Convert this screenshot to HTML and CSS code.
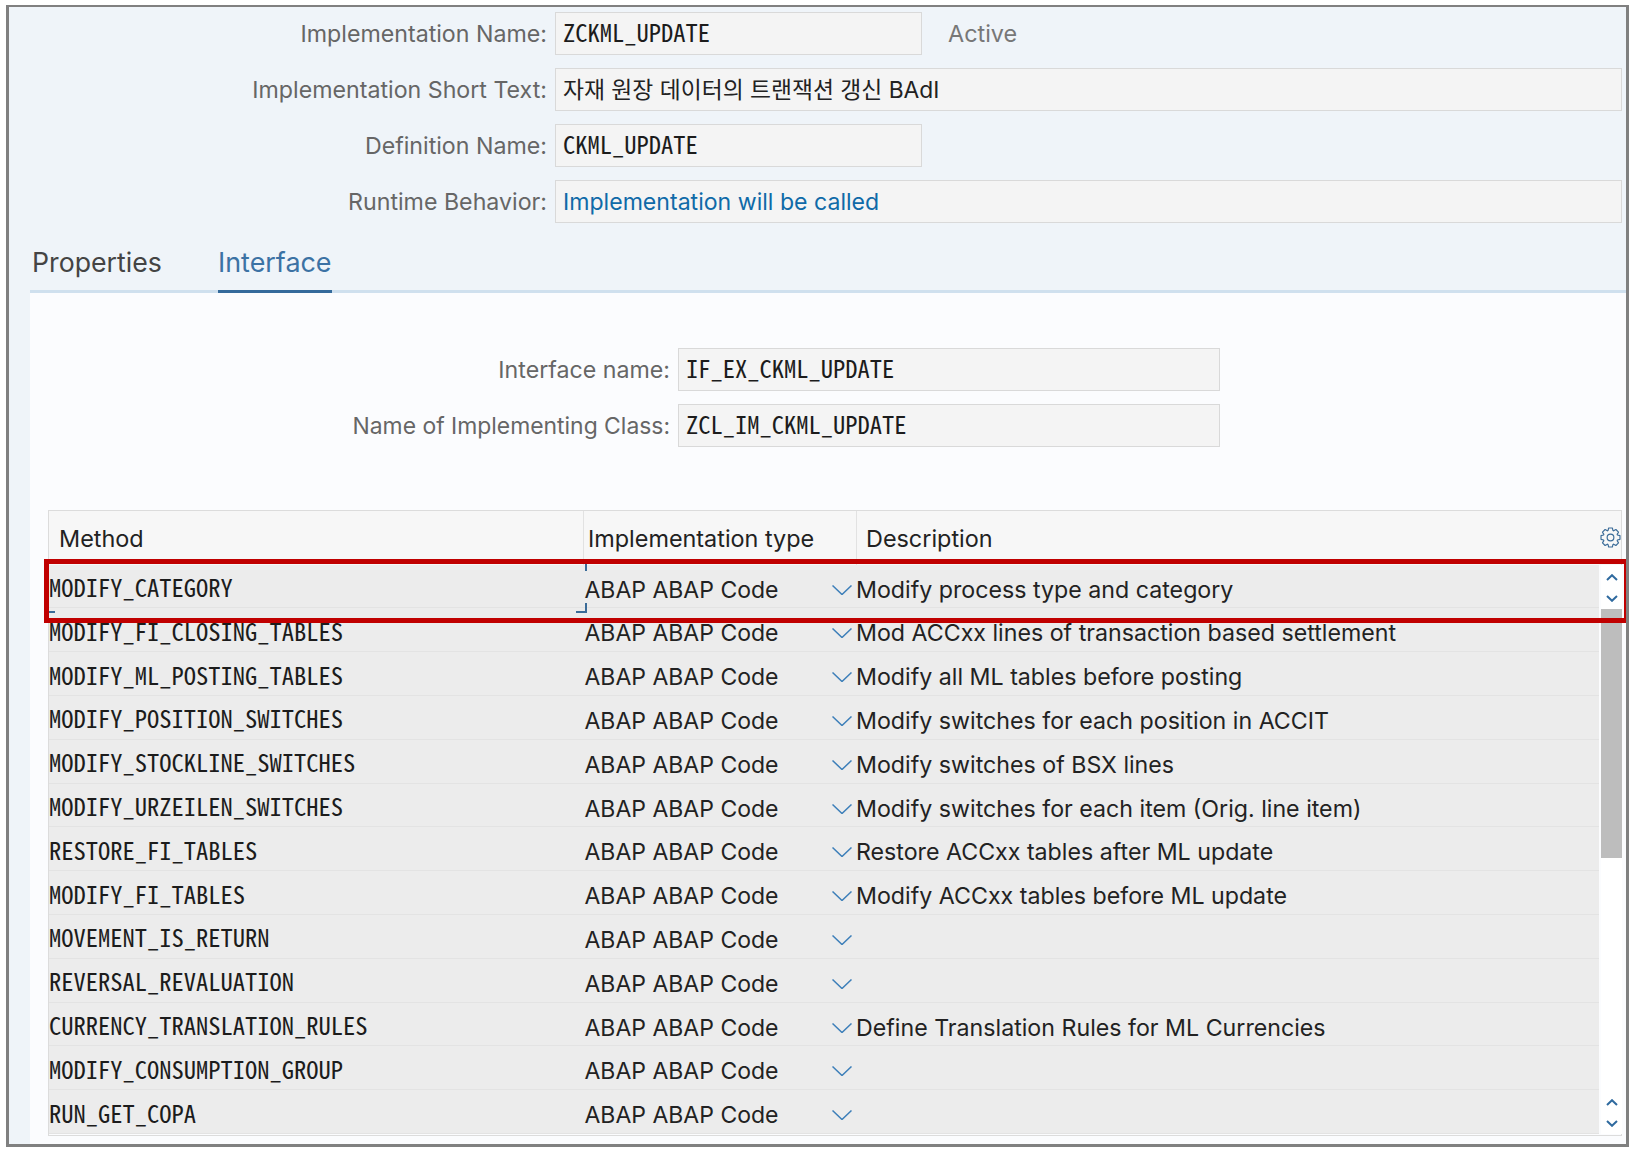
FILE: index.html
```html
<!DOCTYPE html>
<html lang="en">
<head>
<meta charset="utf-8">
<title>BAdI Implementation</title>
<link rel="stylesheet" href="styles.css">
</head>
<body>
<div class="frame">
  <div class="form">
    <label class="lbl">Implementation Name:</label>
    <div class="short-row"><div class="box box-short mono">ZCKML_UPDATE</div><span class="status">Active</span></div>
    <label class="lbl">Implementation Short Text:</label>
    <div class="box kor">자재 원장 데이터의 트랜잭션 갱신 BAdI</div>
    <label class="lbl">Definition Name:</label>
    <div class="box box-short mono">CKML_UPDATE</div>
    <label class="lbl">Runtime Behavior:</label>
    <div class="box link">Implementation will be called</div>
  </div>
  <div class="tabs">
    <div class="tab">Properties</div>
    <div class="tab tab-active">Interface</div>
  </div>
  <div class="panel">
    <div class="form2">
      <label class="lbl">Interface name:</label>
      <div class="box mono">IF_EX_CKML_UPDATE</div>
      <label class="lbl lbl-tight">Name of Implementing Class:</label>
      <div class="box mono">ZCL_IM_CKML_UPDATE</div>
    </div>
    <div class="table">
      <div class="thead">
        <div class="th th1">Method</div>
        <div class="th th2">Implementation type</div>
        <div class="th th3">Description</div>
        <svg class="gear" viewBox="0 0 20 20"><polygon points="7.61,3.42 8.24,.97 11.76,.97 12.39,3.42 12.96,3.66 15.14,2.37 17.63,4.86 16.34,7.04 16.58,7.61 19.03,8.24 19.03,11.76 16.58,12.39 16.34,12.96 17.63,15.14 15.14,17.63 12.96,16.34 12.39,16.58 11.76,19.03 8.24,19.03 7.61,16.58 7.04,16.34 4.86,17.63 2.37,15.14 3.66,12.96 3.42,12.39 .97,11.76 .97,8.24 3.42,7.61 3.66,7.04 2.37,4.86 4.86,2.37 7.04,3.66"/><circle cx="10" cy="10" r="3.2"/></svg>
      </div>
      <div class="tbody">
        <div class="rows">
          <div class="row"><div class="c1 mono">MODIFY_CATEGORY</div><div class="c2">ABAP ABAP Code<svg class="dd" viewBox="0 0 20 10"><path d="M.5.5 10 9.5 19.5.5"/></svg></div><div class="c3">Modify process type and category</div></div>
          <div class="row"><div class="c1 mono">MODIFY_FI_CLOSING_TABLES</div><div class="c2">ABAP ABAP Code<svg class="dd" viewBox="0 0 20 10"><path d="M.5.5 10 9.5 19.5.5"/></svg></div><div class="c3">Mod ACCxx lines of transaction based settlement</div></div>
          <div class="row"><div class="c1 mono">MODIFY_ML_POSTING_TABLES</div><div class="c2">ABAP ABAP Code<svg class="dd" viewBox="0 0 20 10"><path d="M.5.5 10 9.5 19.5.5"/></svg></div><div class="c3">Modify all ML tables before posting</div></div>
          <div class="row"><div class="c1 mono">MODIFY_POSITION_SWITCHES</div><div class="c2">ABAP ABAP Code<svg class="dd" viewBox="0 0 20 10"><path d="M.5.5 10 9.5 19.5.5"/></svg></div><div class="c3">Modify switches for each position in ACCIT</div></div>
          <div class="row"><div class="c1 mono">MODIFY_STOCKLINE_SWITCHES</div><div class="c2">ABAP ABAP Code<svg class="dd" viewBox="0 0 20 10"><path d="M.5.5 10 9.5 19.5.5"/></svg></div><div class="c3">Modify switches of BSX lines</div></div>
          <div class="row"><div class="c1 mono">MODIFY_URZEILEN_SWITCHES</div><div class="c2">ABAP ABAP Code<svg class="dd" viewBox="0 0 20 10"><path d="M.5.5 10 9.5 19.5.5"/></svg></div><div class="c3">Modify switches for each item (Orig. line item)</div></div>
          <div class="row"><div class="c1 mono">RESTORE_FI_TABLES</div><div class="c2">ABAP ABAP Code<svg class="dd" viewBox="0 0 20 10"><path d="M.5.5 10 9.5 19.5.5"/></svg></div><div class="c3">Restore ACCxx tables after ML update</div></div>
          <div class="row"><div class="c1 mono">MODIFY_FI_TABLES</div><div class="c2">ABAP ABAP Code<svg class="dd" viewBox="0 0 20 10"><path d="M.5.5 10 9.5 19.5.5"/></svg></div><div class="c3">Modify ACCxx tables before ML update</div></div>
          <div class="row"><div class="c1 mono">MOVEMENT_IS_RETURN</div><div class="c2">ABAP ABAP Code<svg class="dd" viewBox="0 0 20 10"><path d="M.5.5 10 9.5 19.5.5"/></svg></div><div class="c3"></div></div>
          <div class="row"><div class="c1 mono">REVERSAL_REVALUATION</div><div class="c2">ABAP ABAP Code<svg class="dd" viewBox="0 0 20 10"><path d="M.5.5 10 9.5 19.5.5"/></svg></div><div class="c3"></div></div>
          <div class="row"><div class="c1 mono">CURRENCY_TRANSLATION_RULES</div><div class="c2">ABAP ABAP Code<svg class="dd" viewBox="0 0 20 10"><path d="M.5.5 10 9.5 19.5.5"/></svg></div><div class="c3">Define Translation Rules for ML Currencies</div></div>
          <div class="row"><div class="c1 mono">MODIFY_CONSUMPTION_GROUP</div><div class="c2">ABAP ABAP Code<svg class="dd" viewBox="0 0 20 10"><path d="M.5.5 10 9.5 19.5.5"/></svg></div><div class="c3"></div></div>
          <div class="row"><div class="c1 mono">RUN_GET_COPA</div><div class="c2">ABAP ABAP Code<svg class="dd" viewBox="0 0 20 10"><path d="M.5.5 10 9.5 19.5.5"/></svg></div><div class="c3"></div></div>
        </div>
        <div class="scrollbar">
          <div class="sb-btns"><svg class="arr" viewBox="0 0 12 7"><path d="M1 6 6 1.2 11 6"/></svg><svg class="arr" viewBox="0 0 12 7"><path d="M1 1 6 5.8 11 1"/></svg></div>
          <div class="sb-thumb"></div>
          <div class="sb-track"></div>
          <div class="sb-btns"><svg class="arr" viewBox="0 0 12 7"><path d="M1 6 6 1.2 11 6"/></svg><svg class="arr" viewBox="0 0 12 7"><path d="M1 1 6 5.8 11 1"/></svg></div>
        </div>
      </div>
      <div class="mark mark-a"></div>
      <div class="mark mark-b"></div>
      <div class="mark mark-c"></div>
      <div class="mark mark-d"></div>
      <div class="highlight"></div>
    </div>
  </div>
</div>
</body>
</html>
```

FILE: styles.css
```css
* { box-sizing: border-box; }
html, body { margin: 0; padding: 0; background: #fff; }
body { width: 1631px; height: 1152px; overflow: hidden; font-family: Inter, "Noto Sans CJK KR", sans-serif; color: #222; }
.frame { margin: 5px 2px 0 6px; width: 1623px; height: 1142px; border: solid #808080; border-width: 2px 3px 3px 3px; background: #eff4f9; display: flex; flex-direction: column; overflow: hidden; }
.form { display: grid; grid-template-columns: 538px 1067px; column-gap: 8px; row-gap: 13px; grid-auto-rows: 43px; padding-top: 4.5px; }
.form2 { display: grid; grid-template-columns: 622px 542px; column-gap: 8px; row-gap: 13px; grid-auto-rows: 43px; }
.lbl { font-size: 23.2px; color: #666; text-align: right; align-self: center; white-space: nowrap; padding-top: 2px; }
.lbl-tight { font-size: 22.9px; }
.box { background: #f4f4f4; border: 1px solid #d9d9d9; padding-left: 7px; display: flex; align-items: center; font-size: 23.1px; color: #222; white-space: nowrap; }
.short-row { display: flex; align-items: center; }
.box-short { width: 367px; height: 43px; }
.status { margin-left: 26px; font-size: 23.4px; color: #777; }
.mono { font-family: "Noto Sans Mono CJK KR", "DejaVu Sans Mono", monospace; font-size: 24.5px; color: #1c1c1c; }
.box.mono { padding-bottom: 3px; }
.box.kor { font-size: 22.8px; padding-bottom: 1px; }
.link { color: #0f6aa8; padding-top: 2px; }
.tabs { display: flex; margin-left: 21px; margin-top: 14px; height: 56.5px; border-bottom: 3px solid #cfe0ee; }
.tab { font-size: 26.7px; line-height: 51.5px; height: 56.5px; color: #444; padding-left: 2px; width: 188px; }
.tab-active { color: #3c72a4; padding-left: 0; width: 114px; border-bottom: 3px solid #346a9b; font-size: 26.9px; }
.panel { margin-left: 21px; flex: 1; background: #fbfcfe; padding: 54.5px 4px 0 18px; }
.table { position: relative; margin-top: 63px; width: 1574px; height: 626px; border: 1px solid #dcdcdc; }
.thead { height: 54.2px; background: #f7f7f7; display: grid; grid-template-columns: 535px 273px 1fr; position: relative; }
.th { font-size: 23.4px; color: #222; display: flex; align-items: center; height: 100%; padding-top: 1px; }
.th1 { padding-left: 10px; border-right: 1px solid #e2e2e2; }
.th2 { padding-left: 4px; border-right: 1px solid #e2e2e2; }
.th3 { padding-left: 9px; }
.gear { position: absolute; right: 0; top: 16px; width: 21px; height: 21px; fill: none; stroke: #3a6b98; stroke-width: 1.1; stroke-linejoin: round; }
.tbody { display: flex; }
.rows { width: 1550px; flex: none; }
.row { height: 43.8px; background: #ececec; border-bottom: 1px solid #e3e3e3; display: grid; grid-template-columns: 535px 273px 1fr; align-items: center; font-size: 23px; color: #222; white-space: nowrap; }
.row .mono { font-size: 24.5px; padding-top: 1px; }
.c2 { padding-left: .5px; padding-top: 7px; position: relative; height: 100%; display: flex; align-items: center; }
.c3 { padding-top: 7px; font-size: 23.2px; margin-left: -1px; }
.dd { position: absolute; right: 5px; top: 20px; width: 20px; height: 10px; fill: none; stroke: #3d7fb9; stroke-width: 1.5; }
.scrollbar { margin-left: 2px; width: 21px; flex: none; background: #fff; display: flex; flex-direction: column; }
.sb-btns { height: 44px; flex: none; display: flex; flex-direction: column; align-items: center; justify-content: center; gap: 14px; padding-top: 2px; }
.sb-thumb { height: 249px; background: #bdbdbd; flex: none; }
.sb-track { flex: 1; }
.arr { width: 12px; height: 7px; fill: none; stroke: #2f6a9f; stroke-width: 2; }
.mark { position: absolute; background: #3a6b98; }
.mark-a { left: 536px; top: 53px; width: 2px; height: 7px; }
.mark-b { left: 0; top: 100px; width: 6px; height: 2px; }
.mark-c { left: 527px; top: 100px; width: 11px; height: 2px; }
.mark-d { left: 536px; top: 92px; width: 2px; height: 10px; }
.highlight { position: absolute; left: -5px; top: 48px; width: 1585px; height: 64px; border: 5px solid #c00000; }
```
